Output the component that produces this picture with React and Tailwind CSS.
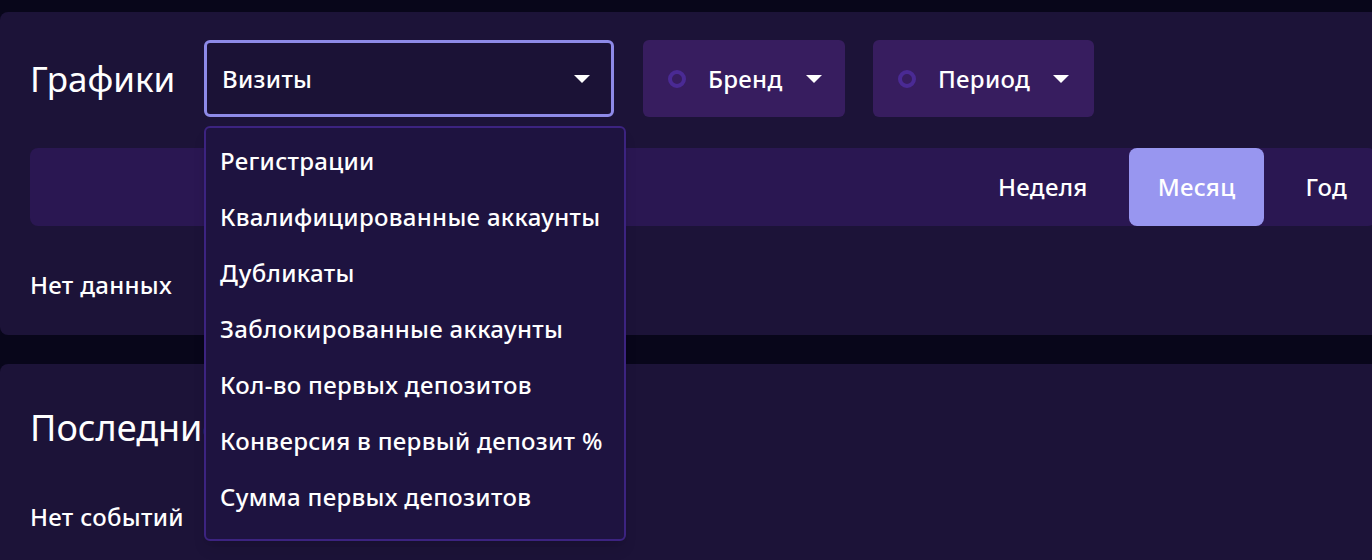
import React from 'react';

const font = { fontFamily: '"Noto Sans", "Open Sans", sans-serif' };

const menuItems = [
    'Регистрации',
    'Квалифицированные аккаунты',
    'Дубликаты',
    'Заблокированные аккаунты',
    'Кол-во первых депозитов',
    'Конверсия в первый депозит %',
    'Сумма первых депозитов',
];

function Caret() {
    return (
        <svg width="16" height="8" viewBox="0 0 16 8" className="shrink-0">
            <path d="M0 0 H16 L8 8 Z" fill="#ffffff" />
        </svg>
    );
}

function FilterButton({ label, width }) {
    return (
        <button className={`flex items-center h-[77px] rounded-md bg-[#371d5f] pl-[25px] text-white text-[24px] font-medium tracking-[0.3px] ${width}`}>
            <span className="w-[18px] h-[18px] rounded-full border-[4px] border-[#4a2a94] shrink-0" />
            <span className="ml-[22px]">{label}</span>
            <span className="ml-[23px]"><Caret /></span>
        </button>
    );
}

export default function App() {
    return (
        <div className="h-[560px] overflow-hidden bg-[#08061a] pt-3 text-white" style={font}>

            {/* ГРАФИКИ */}
            <div className="w-[1406px] h-[323px] rounded-l-lg bg-[#1c1338] pl-[30px] pr-[30px] pt-[28px]">
                <div className="flex items-center">
                    <h2 className="text-[35px] w-[174px] leading-none">Графики</h2>

                    <div className="relative">
                        <div className="flex items-center justify-between w-[410px] h-[77px] rounded-md border-[3px] border-[#8e8ae8] bg-[#1b1236] pl-[15px] pr-[21px]">
                            <span className="text-[24px] font-medium tracking-[0.3px]">Визиты</span>
                            <Caret />
                        </div>

                        {/* ВЫПАДАЮЩИЙ СПИСОК */}
                        <div className="absolute left-0 top-[86px] z-10 w-[422px] h-[415px] rounded-md border-2 border-[#3c2380] bg-[#1e1340] pt-[5px] shadow-lg">
                            {menuItems.map((item) => (
                                <div key={item} className="flex items-center h-[56px] pl-[14px] text-[24px] font-medium tracking-[0.3px] whitespace-nowrap">
                                    {item}
                                </div>
                            ))}
                        </div>
                    </div>

                    <div className="ml-[29px]">
                        <FilterButton label="Бренд" width="w-[202px]" />
                    </div>
                    <div className="ml-[28px]">
                        <FilterButton label="Период" width="w-[221px]" />
                    </div>
                </div>

                <div className="flex justify-end gap-3 h-[78px] mt-[31px] rounded-lg bg-[#2a1752] text-[24px] font-medium tracking-[0.3px]">
                    <button className="px-[29px] rounded-lg">Неделя</button>
                    <button className="px-[29px] rounded-lg bg-[#9896f0]">Месяц</button>
                    <button className="px-[29px] rounded-lg">Год</button>
                </div>

                <p className="mt-[45px] text-[24px] font-medium tracking-[0.3px] leading-7">Нет данных</p>
            </div>

            {/* ПОСЛЕДНИЕ СОБЫТИЯ */}
            <div className="w-[1406px] h-[300px] mt-[29px] rounded-l-lg bg-[#1c1338] pl-[30px] pt-[46px]">
                <h2 className="text-[36px] leading-none">Последние события</h2>
                <p className="mt-[57px] text-[24px] font-medium tracking-[0.3px] leading-7">Нет событий</p>
            </div>
        </div>
    );
}
